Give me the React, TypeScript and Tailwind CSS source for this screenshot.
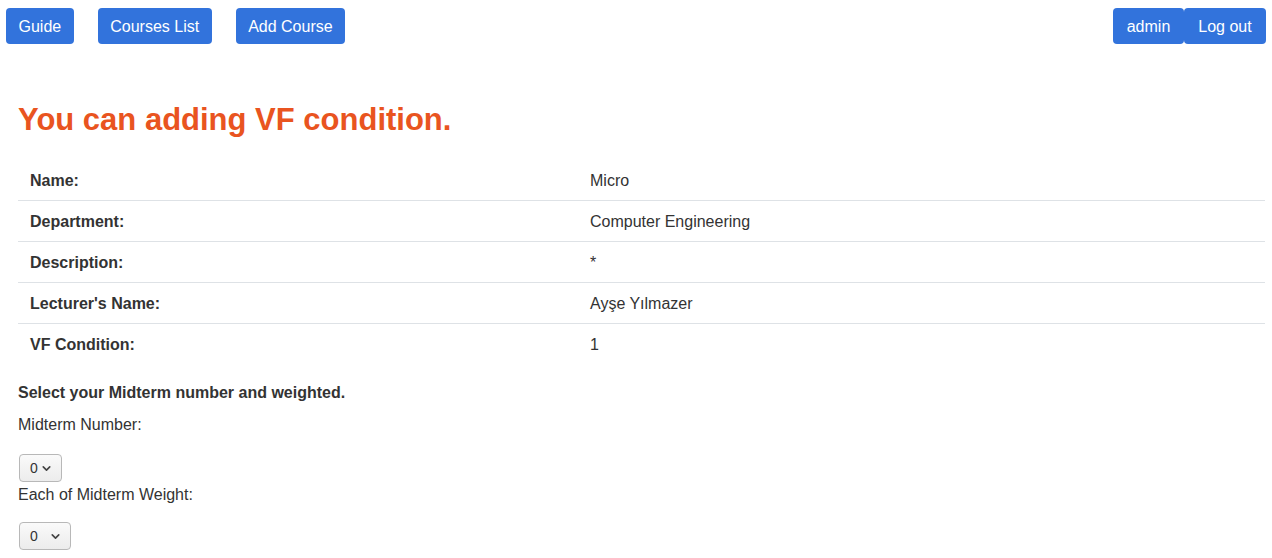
import { ChevronDown } from "lucide-react";

const ROWS = [
  { label: "Name:", value: "Micro" },
  { label: "Department:", value: "Computer Engineering" },
  { label: "Description:", value: "*" },
  { label: "Lecturer's Name:", value: "Ayşe Yılmazer" },
  { label: "VF Condition:", value: "1" },
];

function NavBtn({ children, className = "" }: { children: React.ReactNode; className?: string }) {
  return (
    <button className={"h-9 px-[12.5px] pt-[2px] bg-[#3273dc] text-white text-base rounded-[4px] " + className}>{children}</button>
  );
}

function Select({ width }: { width: string }) {
  return (
    <div className={"h-[28px] flex items-center justify-between pl-[10px] pr-[8px] border border-[#b8b8b8] rounded-[4px] bg-gradient-to-b from-[#fafafa] to-[#ececec] text-[14px] text-[#333] " + width}>
      <span>0</span>
      <ChevronDown size={13} strokeWidth={3} className="text-[#444]" />
    </div>
  );
}

export default function App() {
  return (
    <div className="min-h-screen bg-white text-[#333] font-['Liberation_Sans',sans-serif]">
      <div className="flex items-center justify-between pt-2 pl-[6px] pr-[6px]">
        <div className="flex gap-6">
          <NavBtn>Guide</NavBtn>
          <NavBtn>Courses List</NavBtn>
          <NavBtn>Add Course</NavBtn>
        </div>
        <div className="flex">
          <NavBtn className="w-[71px]">admin</NavBtn>
          <NavBtn className="w-[82px]">Log out</NavBtn>
        </div>
      </div>

      <div className="pl-[18px] pr-[7px]">
        <h1 className="mt-[57px] text-[31px] font-bold text-[#e95420] leading-[38px]">You can adding VF condition.</h1>

        <table className="mt-[20px] w-full text-base">
          <tbody>
            {ROWS.map((r, i) => (
              <tr key={r.label} className={i < ROWS.length - 1 ? "border-b border-[#dee2e6]" : ""}>
                <td className="w-[560px] h-[41px] px-3 pt-[3px] font-bold">{r.label}</td>
                <td className="h-[41px] px-3 pt-[3px]">{r.value}</td>
              </tr>
            ))}
          </tbody>
        </table>

        <p className="mt-[17px] font-bold text-base leading-6">Select your Midterm number and weighted.</p>
        <p className="mt-2 text-base leading-6">Midterm Number:</p>
        <div className="mt-[17px] ml-px">
          <Select width="w-[43px]" />
        </div>
        <p className="mt-[1px] text-base leading-6">Each of Midterm Weight:</p>
        <div className="mt-[15px] ml-px">
          <Select width="w-[52px]" />
        </div>
      </div>
    </div>
  );
}
